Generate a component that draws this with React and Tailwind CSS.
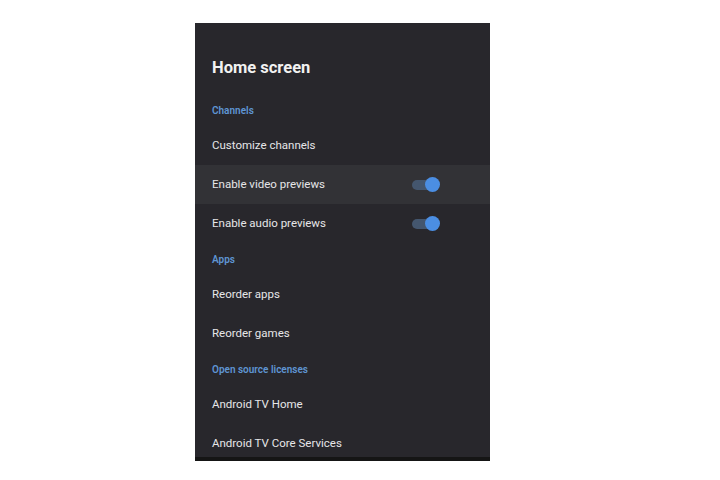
import { useState } from "react";

const Toggle = ({ on }) => (
  <div className="relative w-[28px] h-[14px] flex items-center">
    <div className="w-[24px] h-[10px] rounded-full bg-[#44566e]" />
    <div
      className={`absolute w-[15px] h-[15px] rounded-full bg-[#4b8ee3] ${
        on ? "left-[13px]" : "left-0"
      }`}
    />
  </div>
);

const Header = ({ children }) => (
  <div className="h-[32px] shrink-0 flex items-center text-[10px] font-semibold text-[#5f95d3]">
    {children}
  </div>
);

const Row = ({ label, toggle, active }) => (
  <div
    className={`h-[39px] shrink-0 -mx-[17px] px-[17px] flex items-center justify-between ${
      active ? "bg-[#323236]" : ""
    }`}
  >
    <span className="text-[11.5px] text-[#e6e6e8]">{label}</span>
    {toggle && (
      <div className="mr-[33px]">
        <Toggle on />
      </div>
    )}
  </div>
);

const App = () => {
  const [active] = useState("video");

  return (
    <div
      className="w-[720px] h-[480px] bg-white pt-[23px] pl-[195px]"
      style={{ fontFamily: "Roboto, 'Noto Sans', sans-serif" }}
    >
      <div className="w-[295px] h-[438px] bg-[#28272c] flex flex-col">
        <div className="flex-1 min-h-0 px-[17px] flex flex-col overflow-hidden">
          <h1 className="h-[71px] shrink-0 pt-[33px] text-[16.5px] font-bold text-[#f2f2f2] leading-[24px]">
            Home screen
          </h1>
          <Header>Channels</Header>
          <Row label="Customize channels" />
          <Row label="Enable video previews" toggle active={active === "video"} />
          <Row label="Enable audio previews" toggle />
          <Header>Apps</Header>
          <Row label="Reorder apps" />
          <Row label="Reorder games" />
          <Header>Open source licenses</Header>
          <Row label="Android TV Home" />
          <Row label="Android TV Core Services" />
        </div>
        <div className="h-[4px] shrink-0 bg-[#151515]" />
      </div>
    </div>
  );
};

export default App;
